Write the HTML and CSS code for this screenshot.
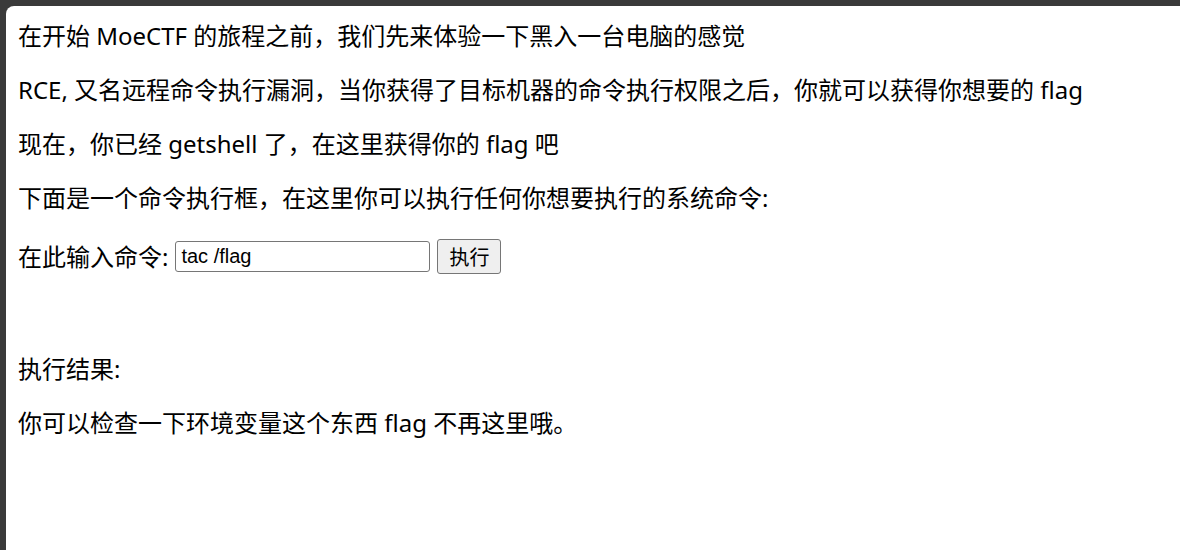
FILE: index.html
```html
<!DOCTYPE html>
<html lang="zh-CN">
<head>
<meta charset="utf-8">
<title>MoeCTF</title>
<link rel="stylesheet" href="styles.css">
</head>
<body>
<div class="page">
  <p>在开始 MoeCTF 的旅程之前，我们先来体验一下黑入一台电脑的感觉</p>
  <p>RCE, 又名远程命令执行漏洞，当你获得了目标机器的命令执行权限之后，你就可以获得你想要的 flag</p>
  <p>现在，你已经 getshell 了，在这里获得你的 flag 吧</p>
  <p>下面是一个命令执行框，在这里你可以执行任何你想要执行的系统命令:</p>
  <form class="cmd-form">
    <label class="cmd-label" for="cmd">在此输入命令:</label>
    <input class="cmd-input" id="cmd" type="text" value="tac /flag">
    <button class="cmd-btn" type="button">执行</button>
  </form>
  <p class="result-label">执行结果:</p>
  <p>你可以检查一下环境变量这个东西 flag 不再这里哦。</p>
</div>
</body>
</html>
```

FILE: styles.css
```css
html, body {
  margin: 0;
  padding: 0;
  height: 100%;
  background: #3a3a3a;
}
body {
  padding: 6px 0 0 6px;
  box-sizing: border-box;
  overflow: hidden;
}
.page {
  background: #ffffff;
  border-top-left-radius: 8px;
  height: 100%;
  box-sizing: border-box;
  padding: 15px 12px 0 12px;
  font-family: "Noto Sans", "Noto Sans CJK SC", sans-serif;
  font-size: 24px;
  line-height: 30px;
  color: #000;
}
.page p {
  margin: 0 0 24px 0;
}
.cmd-form {
  display: flex;
  align-items: center;
  height: 39px;
  margin: 0 0 78px 0;
}
.cmd-label {
  margin-right: 7px;
}
.cmd-input {
  width: 255px;
  height: 31px;
  box-sizing: border-box;
  border: 1px solid #767676;
  border-radius: 3px;
  padding: 0 5px;
  font-family: "Liberation Sans", Arial, sans-serif;
  font-size: 20px;
  color: #000;
  margin: 0 7px 0 0;
}
.cmd-btn {
  height: 35px;
  box-sizing: border-box;
  padding: 0 11px;
  border: 1px solid #767676;
  border-radius: 3px;
  background: #efefef;
  font-family: "Noto Sans CJK SC", sans-serif;
  font-size: 20px;
  line-height: 1;
  color: #000;
  margin: 0;
}
```
